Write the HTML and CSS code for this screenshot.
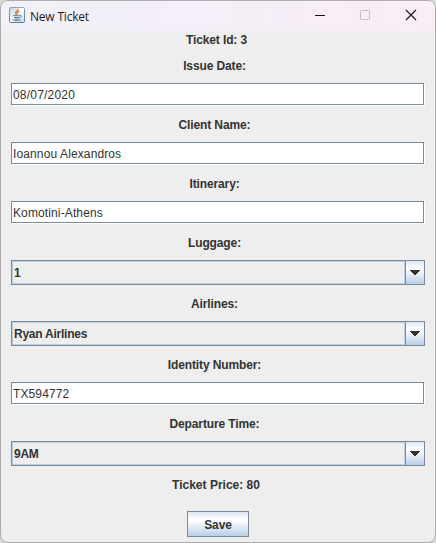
FILE: index.html
```html
<!DOCTYPE html>
<html lang="en">
<head>
<meta charset="utf-8">
<title>New Ticket</title>
<link rel="stylesheet" href="styles.css">
</head>
<body>
<div class="window">
  <header class="titlebar">
    <svg class="logo" width="16" height="16" viewBox="0 0 16 16">
      <defs><linearGradient id="g" x2="0" y2="1"><stop stop-color="#8fa5b5"/><stop offset="1" stop-color="#557b93"/></linearGradient>
      <linearGradient id="f" x2="1" y2="1"><stop stop-color="#b9c9d5"/><stop offset=".5" stop-color="#fff"/><stop offset="1" stop-color="#c5d3dd"/></linearGradient></defs>
      <rect x=".5" y=".5" width="15" height="15" rx="1" fill="url(#f)" stroke="url(#g)"/>
      <path d="M8.800 1.800C9.400 4 5.800 4.500 6.500 6.500L7.700 8M10.300 4C8 5 7.800 6 8.600 7" fill="none" stroke="#e8762c" stroke-width="1.300"/>
      <path d="M4 8.700h6.800M5 10.400h5M5.300 12h4.500M10.800 8.500c2-.4 2 1.700-.5 2.300M3.500 12.300c0 1.400 6.500 1.500 8.500.2" fill="none" stroke="#4d7896"/>
    </svg>
    <span class="title">New Ticket</span>
    <svg class="controls" width="116" height="30" viewBox="0 0 116 30" fill="none">
      <path d="M0 15.500h10" stroke="#111"/>
      <rect x="45.500" y="10.500" width="9" height="9" rx=".8" stroke="#c6bec7"/>
      <path d="M91 10l10 10M101 10l-10 10" stroke="#1a1a1a" stroke-width="1.150"/>
    </svg>
  </header>
  <main class="form">
    <div class="label ticket-id">Ticket Id: 3</div>
    <div class="label">Issue Date:</div>
    <div class="field digits">08/07/2020</div>
    <div class="label">Client Name:</div>
    <div class="field">Ioannou Alexandros</div>
    <div class="label">Itinerary:</div>
    <div class="field">Komotini-Athens</div>
    <div class="label">Luggage:</div>
    <div class="combo"><span class="value">1</span><span class="arrow"><svg width="10" height="5" shape-rendering="crispEdges"><path d="M0 0h10v1H9v1H8v1H7v1H6v1H4V4H3V3H2V2H1V1H0z" fill="#333"/></svg></span></div>
    <div class="label">Airlines:</div>
    <div class="combo"><span class="value">Ryan Airlines</span><span class="arrow"><svg width="10" height="5" shape-rendering="crispEdges"><path d="M0 0h10v1H9v1H8v1H7v1H6v1H4V4H3V3H2V2H1V1H0z" fill="#333"/></svg></span></div>
    <div class="label">Identity Number:</div>
    <div class="field">TX594772</div>
    <div class="label">Departure Time:</div>
    <div class="combo"><span class="value">9AM</span><span class="arrow"><svg width="10" height="5" shape-rendering="crispEdges"><path d="M0 0h10v1H9v1H8v1H7v1H6v1H4V4H3V3H2V2H1V1H0z" fill="#333"/></svg></span></div>
    <div class="label price">Ticket Price: 80</div>
    <button class="save">Save</button>
  </main>
</div>
</body>
</html>
```
FILE: styles.css
```css
* { box-sizing: border-box; }
body { margin: 0; background: #d9d9d9; overflow: hidden; }
.window {
  width: 436px;
  height: 543px;
  border: 1px solid #adadad;
  border-radius: 8px;
  overflow: hidden;
  background: #eee;
  font: bold 12px "Liberation Sans", Arial, sans-serif;
  letter-spacing: -0.12px;
  color: #333;
}
.titlebar {
  height: 30px;
  display: flex;
  align-items: center;
  padding: 0 4px 0 8px;
  background: linear-gradient(90deg, #f2f0f8, #f4eff8 45%, #faedf7);
}
.logo { margin-bottom: 2px; }
.title {
  margin: 0 0 0 5px;
  font: 12px "Open Sans", "Noto Sans", sans-serif;
  letter-spacing: -0.2px;
  color: #1b1b1b;
}
.controls { margin: -2px 0 0 auto; flex: none; }
.form { display: flex; flex-direction: column; padding: 1px 10px 0; }
.label {
  height: 16px;
  line-height: 16px;
  margin-bottom: 9px;
  padding-right: 7px;
  text-align: center;
  white-space: nowrap;
}
.ticket-id { margin-bottom: 10px; padding-right: 3px; }
.field {
  height: 22px;
  margin-bottom: 12px;
  padding: 1px 0 0 1px;
  border: 1px solid #7a8a99;
  box-shadow: 1px 1px #fff;
  background: #fff;
  width: 413px;
  line-height: 21px;
  font-weight: normal;
  letter-spacing: 0.12px;
}
.digits { letter-spacing: 0.2px; }
.combo {
  display: flex;
  width: 414px;
  height: 25px;
  margin-bottom: 11px;
  border: 1px solid #7a8a99;
}
.value {
  flex: 1;
  padding-left: 1px;
  border: 1px solid #b8cfe5;
  line-height: 22px;
  letter-spacing: -0.24px;
}
.arrow {
  width: 19px;
  display: flex;
  align-items: center;
  justify-content: center;
  border-left: 1px solid #7a8a99;
  background: linear-gradient(#dde8f3, #fff 30%, #fff 35%, #b8cfe5);
}
.price { padding-right: 4px; margin-bottom: 18px; letter-spacing: 0; }
.save {
  align-self: center;
  width: 62px;
  height: 26px;
  padding: 1px 0 0;
  border: 1px solid #7a8a99;
  background: linear-gradient(#dde8f3, #fff 30%, #fff 35%, #b8cfe5);
  color: #333;
  font: inherit;
  letter-spacing: -0.12px;
}
```
